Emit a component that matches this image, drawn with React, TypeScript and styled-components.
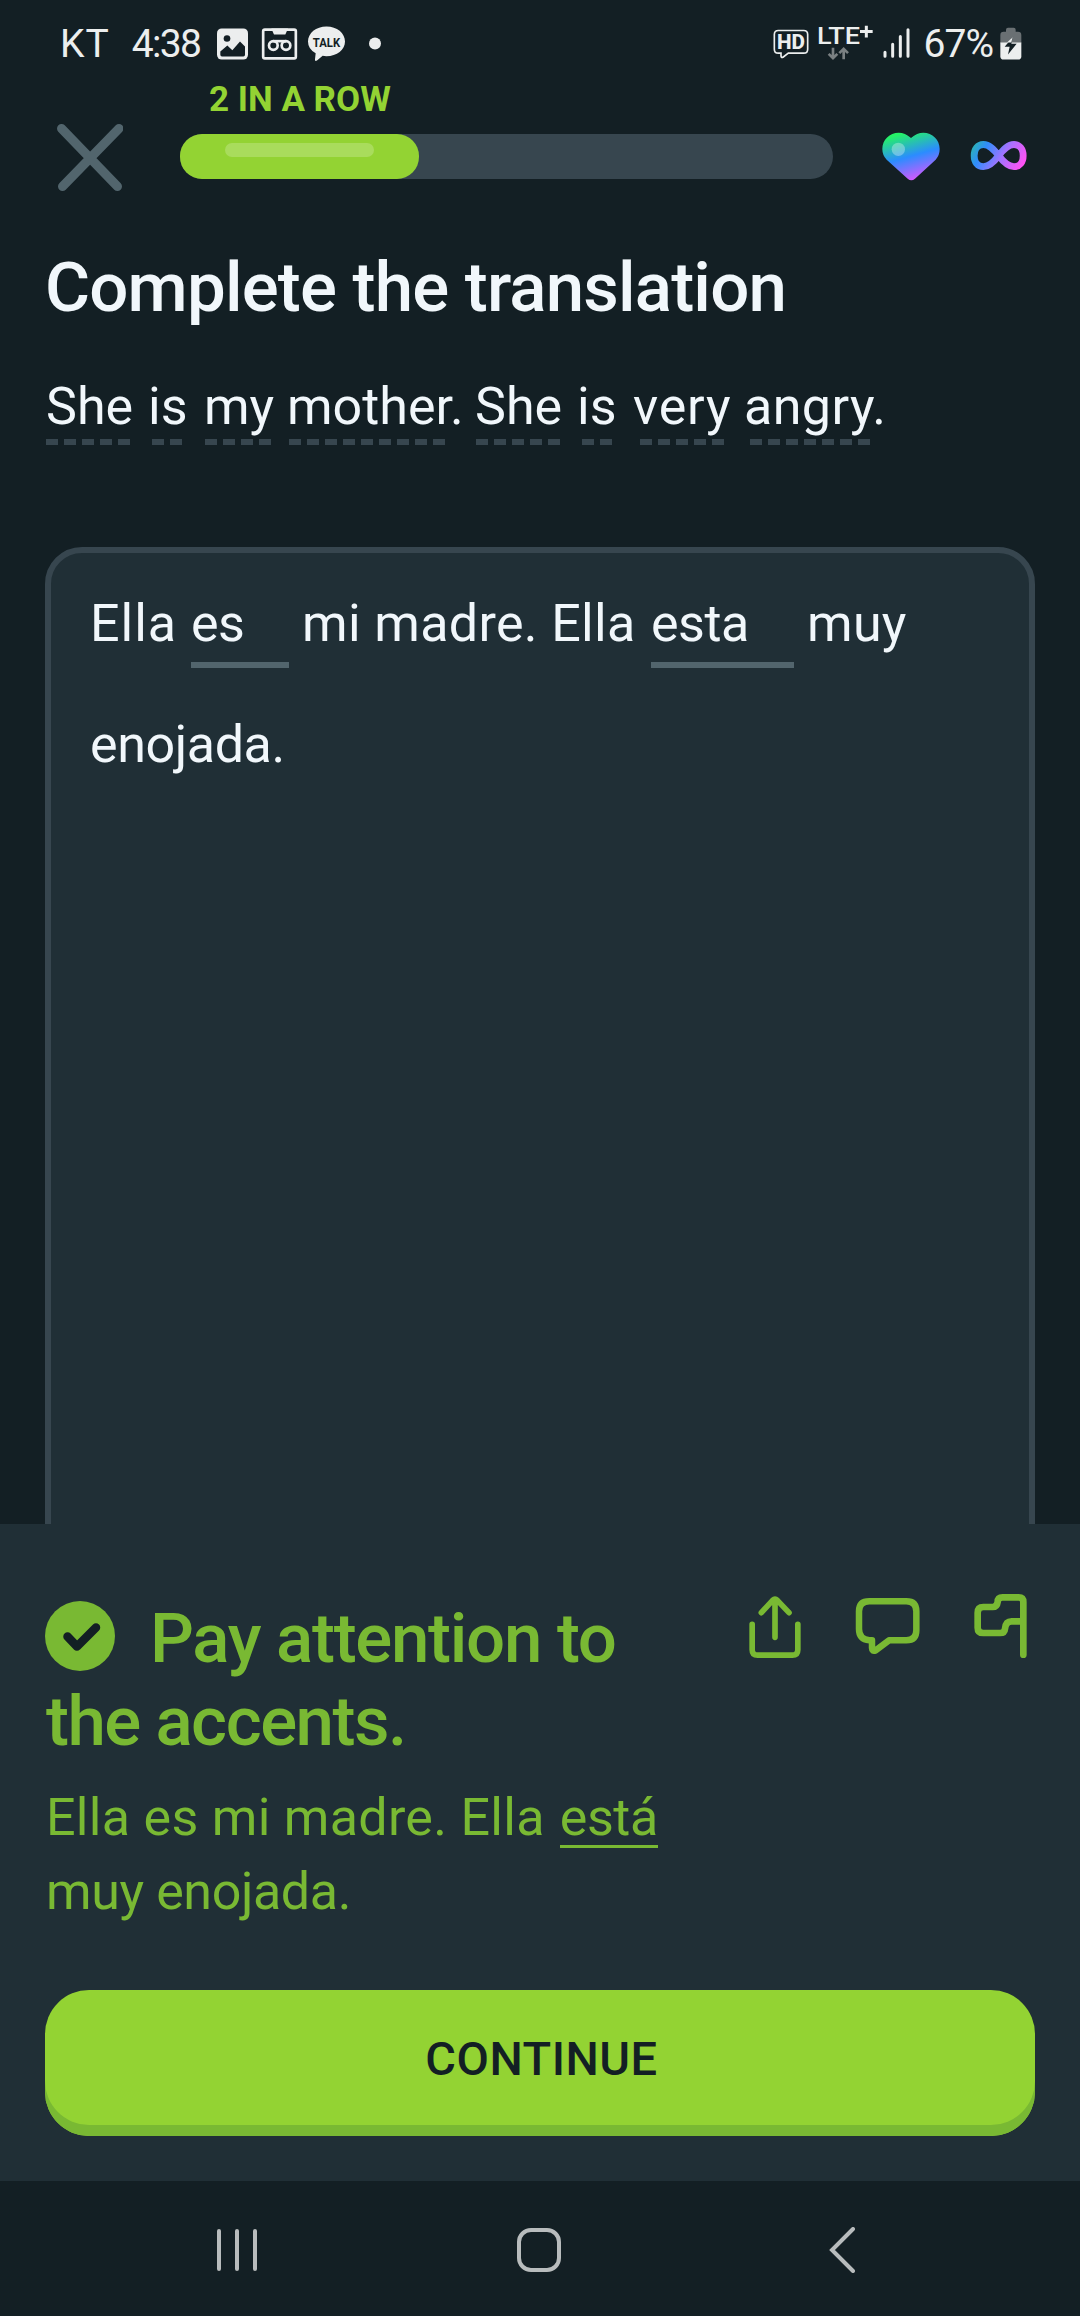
import React from "react";
import styled, { createGlobalStyle } from "styled-components";

const color = {
  bg: "#131f24",
  panel: "#202f36",
  line: "#37464f",
  muted: "#52656d",
  snow: "#f1f7fb",
  green: "#93d333",
  leaf: "#79b933",
  status: "#eceeee",
  nav: "#b8bcbd",
};

const Global = createGlobalStyle`
  * { box-sizing: border-box; }
  body { margin: 0; background: ${color.bg}; }
`;

const Screen = styled.div`
  display: flex;
  flex-direction: column;
  width: 1080px;
  height: 2316px;
  overflow: hidden;
  background: ${color.bg};
  color: ${color.snow};
  font-family: Roboto, "Liberation Sans", sans-serif;
`;

/* ---------- status bar ---------- */

const StatusBar = styled.header`
  display: flex;
  justify-content: space-between;
  align-items: center;
  height: 78px;
  padding: 9px 58px 0 60px;
  color: ${color.status};
`;

const StatusGroup = styled.div`
  display: flex;
  align-items: center;
  height: 69px;
`;

const StatusText = styled.span<{ $spacing: number; $gap: number }>`
  font-size: 39px;
  line-height: 60px;
  letter-spacing: ${(p) => p.$spacing}px;
  margin-right: ${(p) => p.$gap}px;
  white-space: nowrap;
`;

const StatusSvg = styled.svg<{ $gap?: number }>`
  display: block;
  flex: none;
  height: 38px;
  margin-right: ${(p) => p.$gap ?? 0}px;
  overflow: visible;
`;

/* ---------- lesson header ---------- */

const LessonHeader = styled.div`
  display: flex;
  align-items: flex-start;
  height: 115px;
  padding: 0 53px 0 57px;
`;

const CloseButton = styled.button`
  width: 66px;
  height: 67px;
  margin: 46px 57px 0 0;
  padding: 0;
  border: 0;
  background: none;
`;

const ProgressColumn = styled.div`
  display: flex;
  flex-direction: column;
  width: 653px;
  gap: 12px;
`;

const Streak = styled.div`
  margin-left: 29px;
  font-size: 35px;
  font-weight: 700;
  line-height: 44px;
  color: ${color.green};
`;

const Track = styled.div`
  height: 45px;
  border-radius: 23px;
  background: ${color.line};
`;

const Fill = styled.div`
  width: 239px;
  height: 45px;
  padding: 9px 45px 0;
  border-radius: 22px;
  background: ${color.green};
`;

const Shine = styled.div`
  height: 14px;
  border-radius: 7px;
  background: #a9dc5c;
`;

const HeartSvg = styled.svg`
  display: block;
  width: 58px;
  height: 49px;
  margin: 54px 30px 0 49px;
`;

const InfinitySvg = styled.svg`
  display: block;
  width: 57px;
  height: 31px;
  margin-top: 62px;
`;

/* ---------- exercise ---------- */

const Exercise = styled.main`
  display: flex;
  flex-direction: column;
  height: 1331px;
  padding: 0 45px;
  overflow: hidden;
`;

const Title = styled.h1`
  flex: none;
  margin: 55px 0 0;
  font-size: 69px;
  font-weight: 500;
  line-height: 80px;
  letter-spacing: -0.8px;
`;

const Prompt = styled.div`
  display: flex;
  flex: none;
  height: 170px;
  margin: 49px 0 0 1px;
`;

const Word = styled.span<{ $width: number; $spacing?: number }>`
  display: flex;
  flex-direction: column;
  flex: none;
  gap: 2px;
  width: ${(p) => p.$width}px;
  font-size: 52px;
  line-height: 60px;
  letter-spacing: ${(p) => p.$spacing ?? 0}px;
  white-space: nowrap;
`;

const Dashes = styled.span<{ $count: number; $indent: number }>`
  width: ${(p) => p.$count * 18 - 6}px;
  height: 6px;
  margin-left: ${(p) => p.$indent}px;
  background: repeating-linear-gradient(
    90deg,
    ${color.line} 0 12px,
    transparent 12px 18px
  );
`;

const AnswerBox = styled.section`
  height: 1100px;
  flex: none;
  padding: 33px 39px;
  border: 6px solid ${color.line};
  border-radius: 37px;
  background: ${color.panel};
`;

const AnswerLine = styled.div`
  display: flex;
  height: 121px;
  font-size: 52px;
  line-height: 76px;
  white-space: nowrap;
`;

const Piece = styled.span<{ $width?: number; $spacing: number }>`
  flex: none;
  width: ${(p) => (p.$width ? `${p.$width}px` : "auto")};
  letter-spacing: ${(p) => p.$spacing}px;
`;

const Blank = styled.span<{ $width: number; $after: number }>`
  flex: none;
  width: ${(p) => p.$width}px;
  height: 82px;
  margin-right: ${(p) => p.$after}px;
  border-bottom: 6px solid ${color.muted};
  letter-spacing: -0.5px;
`;

/* ---------- feedback sheet ---------- */

const Sheet = styled.section`
  display: flex;
  flex-direction: column;
  height: 657px;
  padding: 73px 45px 0;
  background: ${color.panel};
  color: ${color.leaf};
`;

const SheetTop = styled.div`
  display: flex;
  justify-content: space-between;
  height: 166px;
`;

const Verdict = styled.h2`
  margin: 0;
  font-size: 69px;
  font-weight: 500;
  line-height: 83px;
  white-space: nowrap;
`;

const VerdictLine = styled.div<{ $spacing: number; $indent?: number }>`
  display: flex;
  padding-left: ${(p) => p.$indent ?? 0}px;
  letter-spacing: ${(p) => p.$spacing}px;
`;

const CheckSvg = styled.svg`
  display: block;
  width: 70px;
  height: 70px;
  margin: 4px 35px 0 0;
`;

const Actions = styled.div`
  display: flex;
  gap: 54px;
  margin: -7px 8px 0 0;
`;

const ActionSvg = styled.svg`
  display: block;
  height: 72px;
  fill: none;
  stroke: ${color.leaf};
  stroke-linecap: round;
  stroke-linejoin: round;
`;

const Correction = styled.p`
  height: 148px;
  margin: 18px 0 61px 1px;
  font-size: 52px;
  line-height: 74px;
`;

const CorrectionLine = styled.span<{ $spacing: number }>`
  display: flex;
  letter-spacing: ${(p) => p.$spacing}px;
  white-space: nowrap;
`;

const Accent = styled.span`
  width: 98px;
  height: 67px;
  margin-left: 15px;
  border-bottom: 3px solid ${color.leaf};
  letter-spacing: -0.4px;
`;

const ContinueButton = styled.button`
  height: 146px;
  padding: 0 0 10px 3px;
  border: 0;
  border-radius: 44px;
  background: ${color.green};
  box-shadow: inset 0 -11px 0 ${color.leaf};
  color: ${color.bg};
  font-family: inherit;
  font-size: 47px;
  font-weight: 500;
  letter-spacing: 0.5px;
`;

/* ---------- navigation bar ---------- */

const NavBar = styled.nav`
  display: flex;
  align-items: center;
  height: 135px;
  padding: 3px 0 0 216px;
`;

const NavSvg = styled.svg<{ $before?: number }>`
  display: block;
  height: 46px;
  margin-left: ${(p) => p.$before ?? 0}px;
  fill: none;
  stroke: ${color.nav};
  stroke-width: 4;
  stroke-linecap: round;
`;

const words = [
  { text: "She", width: 102, dashes: 5, indent: 0 },
  { text: "is", width: 56, dashes: 2, indent: 4 },
  { text: "my", width: 83, dashes: 4, indent: 1 },
  { text: "mother.", width: 188, dashes: 9, indent: 2 },
  { text: "She", width: 102, dashes: 5, indent: 1 },
  { text: "is", width: 56, dashes: 2, indent: 5 },
  { text: "very", width: 111, dashes: 5, indent: 7, spacing: 0.8 },
  { text: "angry.", width: 146, dashes: 7, indent: 6, spacing: 0.4 },
];

function StatusLeft() {
  return (
    <StatusGroup>
      <StatusText $spacing={1} $gap={22}>KT</StatusText>
      <StatusText $spacing={-1.7} $gap={17}>4:38</StatusText>
      <StatusSvg $gap={14} width="31" viewBox="531 73.5 93 114">
        <rect x="531" y="84" width="93" height="93" rx="14" fill={color.status} />
        <circle cx="561" cy="114" r="10" fill={color.bg} />
        <path d="M541 153 L562 135 L577 149 L600 123 L615 138 V163 Q615 168 610 168 H546 Q541 168 541 163Z" fill={color.bg} />
      </StatusSvg>
      <StatusSvg $gap={11} width="35" viewBox="666 73.5 105 114" fill="none" stroke={color.status} strokeWidth="8">
        <rect x="669.5" y="87.5" width="98" height="86" rx="5" />
        <path d="M694 84 H744 L736 102 H702Z" fill={color.status} stroke="none" />
        <circle cx="700" cy="135" r="13" />
        <circle cx="738" cy="135" r="13" />
        <path d="M700 122 H738" />
      </StatusSvg>
      <StatusSvg $gap={24} width="37" viewBox="804 73.5 111 114">
        <path d="M859.500 78 C891 78 915 98 915 123 C915 148 891 167 859 167 Q853 167 848 166 L831 180 Q824 184 825 176 L827 158 Q804 146 804 123 C804 98 828 78 859.500 78Z" fill={color.status} />
        <text x="859.5" y="138" textAnchor="middle" textLength="82" lengthAdjust="spacingAndGlyphs" fontSize="39" fontWeight="700" fill={color.bg}>TALK</text>
      </StatusSvg>
      <StatusSvg width="12" viewBox="987 73.500 36 114">
        <circle cx="1005" cy="129" r="18" fill={color.status} />
      </StatusSvg>
    </StatusGroup>
  );
}

function StatusRight() {
  return (
    <StatusGroup>
      <StatusSvg $gap={9} width="36" viewBox="94 73.5 108 114">
        <path d="M110 90 H186 Q198 90 198 102 V146 Q198 158 186 158 H140 L124 170 Q118 173 118 165 V158 H110 Q98 158 98 146 V102 Q98 90 110 90Z" fill="none" stroke={color.status} strokeWidth="5" />
        <text x="148" y="146" textAnchor="middle" textLength="84" lengthAdjust="spacingAndGlyphs" fontSize="60" fontWeight="800" fill={color.status}>HD</text>
      </StatusSvg>
      <StatusSvg $gap={10} width="55" viewBox="232 73.5 165 114">
        <text x="229" y="131" textLength="129" lengthAdjust="spacingAndGlyphs" fontSize="74" fontWeight="500" fill={color.status}>LTE</text>
        <path d="M358 93 H396 M377 76 V111" stroke={color.status} strokeWidth="9" />
        <path d="M277 142 V173 M264 160 L277 173 L290 160 M309 176 V145 M296 158 L309 145 L322 158" fill="none" stroke="#7a8082" strokeWidth="8" />
      </StatusSvg>
      <StatusSvg $gap={13} width="28" viewBox="429 73.5 84 114" stroke={color.status} strokeWidth="9" strokeLinecap="round">
        <path d="M435 155 V167 M458 131 V167 M481 108 V167 M504 88 V167" />
      </StatusSvg>
      <StatusText $spacing={-1} $gap={7}>67%</StatusText>
      <StatusSvg width="22" viewBox="779 73.5 66 114">
        <path d="M780 128 V104 Q780 94 790 94 H797 V88 Q797 82 803 82 H820 Q826 82 826 88 V94 H833 Q843 94 843 104 V128Z" fill="#6a7073" />
        <path d="M780 126 H843 V167 Q843 177 833 177 H790 Q780 177 780 167Z" fill={color.status} />
        <path d="M817 110 L793 139 H808 L803 162 L829 130 H813Z" fill={color.bg} />
        <path d="M817 110 L800 126 H813Z" fill={color.status} />
      </StatusSvg>
    </StatusGroup>
  );
}

function Heart() {
  return (
    <HeartSvg viewBox="427 398 174 147">
      <defs>
        <linearGradient id="heart" gradientUnits="userSpaceOnUse" x1="478" y1="398" x2="520" y2="545">
          <stop offset="0.04" stopColor="#25f266" />
          <stop offset="0.52" stopColor="#2b8cff" />
          <stop offset="1" stopColor="#d957ff" />
        </linearGradient>
      </defs>
      <path
        d="M514 416 Q496 400 477 400 C450 400 428 421 428 449 Q428 468 441 481 L504 538 Q515 547 526 538 L588 481 Q600 468 600 449 C600 421 578 400 551 400 Q532 400 514 416Z"
        fill="url(#heart)"
      />
      <circle cx="476" cy="450" r="20" fill="#fff" opacity="0.32" />
    </HeartSvg>
  );
}

function InfinityLoop() {
  return (
    <InfinitySvg viewBox="691 420 171 93">
      <defs>
        <linearGradient id="loop" gradientUnits="userSpaceOnUse" x1="704" y1="418" x2="845" y2="500">
          <stop offset="0" stopColor="#2bb7ab" />
          <stop offset="0.25" stopColor="#2f8dfc" />
          <stop offset="0.6" stopColor="#a273ff" />
          <stop offset="1" stopColor="#ff52f4" />
        </linearGradient>
      </defs>
      <path
        d="M777 467 C762 447 749 433.5 731 433.5 C714 433.5 703.5 448 703.5 467 C703.5 486 714 500 731 500 C749 500 762 487 777 467 C792 447 805 433.5 823 433.5 C840 433.5 850.5 448 850.5 467 C850.5 486 840 500 823 500 C805 500 792 487 777 467Z"
        fill="none"
        stroke="url(#loop)"
        strokeWidth="20.5"
      />
    </InfinitySvg>
  );
}

export default function App() {
  return (
    <Screen>
      <Global />
      <StatusBar>
        <StatusLeft />
        <StatusRight />
      </StatusBar>

      <LessonHeader>
        <CloseButton aria-label="Close">
          <svg width="66" height="67" viewBox="57 125 66 67" stroke={color.muted} strokeWidth="9" strokeLinecap="round">
            <path d="M61.500 129.500 L117.500 187.500 M119 129.500 L62.500 187.500" />
          </svg>
        </CloseButton>
        <ProgressColumn>
          <Streak>2 IN A ROW</Streak>
          <Track>
            <Fill>
              <Shine />
            </Fill>
          </Track>
        </ProgressColumn>
        <Heart />
        <InfinityLoop />
      </LessonHeader>

      <Exercise>
        <Title>Complete the translation</Title>
        <Prompt>
          {words.map((w, i) => (
            <Word key={i} $width={w.width} $spacing={w.spacing}>
              {w.text}
              <Dashes $count={w.dashes} $indent={w.indent} />
            </Word>
          ))}
        </Prompt>
        <AnswerBox>
          <AnswerLine>
            <Piece $width={101} $spacing={1}>Ella</Piece>
            <Blank $width={98} $after={13}>es</Blank>
            <Piece $width={349} $spacing={0.35}>mi madre. Ella</Piece>
            <Blank $width={143} $after={13}>esta</Blank>
            <Piece $spacing={0.3}>muy</Piece>
          </AnswerLine>
          <AnswerLine>
            <Piece $spacing={-0.4}>enojada.</Piece>
          </AnswerLine>
        </AnswerBox>
      </Exercise>

      <Sheet>
        <SheetTop>
          <Verdict>
            <VerdictLine $spacing={-1.3}>
              <CheckSvg viewBox="0 0 70 70">
                <circle cx="35" cy="35" r="35" fill={color.leaf} />
                <path d="M22.500 35.500 L32 45.500 L51 26.500" fill="none" stroke={color.bg} strokeWidth="8.500" strokeLinecap="round" strokeLinejoin="round" />
              </CheckSvg>
              Pay attention to
            </VerdictLine>
            <VerdictLine $spacing={-1.5} $indent={1}>the accents.</VerdictLine>
          </Verdict>
          <Actions>
            <ActionSvg width="52" viewBox="147 270 156 216" strokeWidth="17">
              <path d="M156.500 373 V449 Q156.500 465.500 173 465.500 H277 Q293.500 465.500 293.500 449 V373 M225 412 V300 M184 338 L218 301 Q225 294 232 301 L267 338" />
            </ActionSvg>
            <ActionSvg width="65" viewBox="466 270 195 216" strokeWidth="19.500">
              <path d="M509 304 H620 Q650 304 650 334 V391 Q650 421 620 421 H568 L528 451 Q517 455 517 444 V421 H509 Q478 418 478 387 V334 Q478 304 509 304Z" />
            </ActionSvg>
            <ActionSvg width="53" viewBox="822 270 159 216" strokeWidth="20">
              <path d="M970 464 V306 Q970 292 956 292 H908 Q893 292 893 306 Q891 321 878 321 H850 Q833 321 833 338 V383 Q833 399 850 399 H900 Q914 399 915 386 Q917 364 935 364 H970" />
            </ActionSvg>
          </Actions>
        </SheetTop>
        <Correction>
          <CorrectionLine $spacing={0.3}>
            Ella es mi madre. Ella<Accent>está</Accent>
          </CorrectionLine>
          <CorrectionLine $spacing={-0.4}>muy enojada.</CorrectionLine>
        </Correction>
        <ContinueButton>CONTINUE</ContinueButton>
      </Sheet>

      <NavBar>
        <NavSvg width="42" viewBox="0 0 42 46">
          <path d="M3 4 V42 M21 4 V42 M39 4 V42" />
        </NavSvg>
        <NavSvg $before={258} width="46" viewBox="0 0 46 46">
          <rect x="3" y="3" width="40" height="40" rx="12" />
        </NavSvg>
        <NavSvg $before={266} width="28" viewBox="0 0 28 46">
          <path d="M25 2 L4 23 L25 44" />
        </NavSvg>
      </NavBar>
    </Screen>
  );
}
